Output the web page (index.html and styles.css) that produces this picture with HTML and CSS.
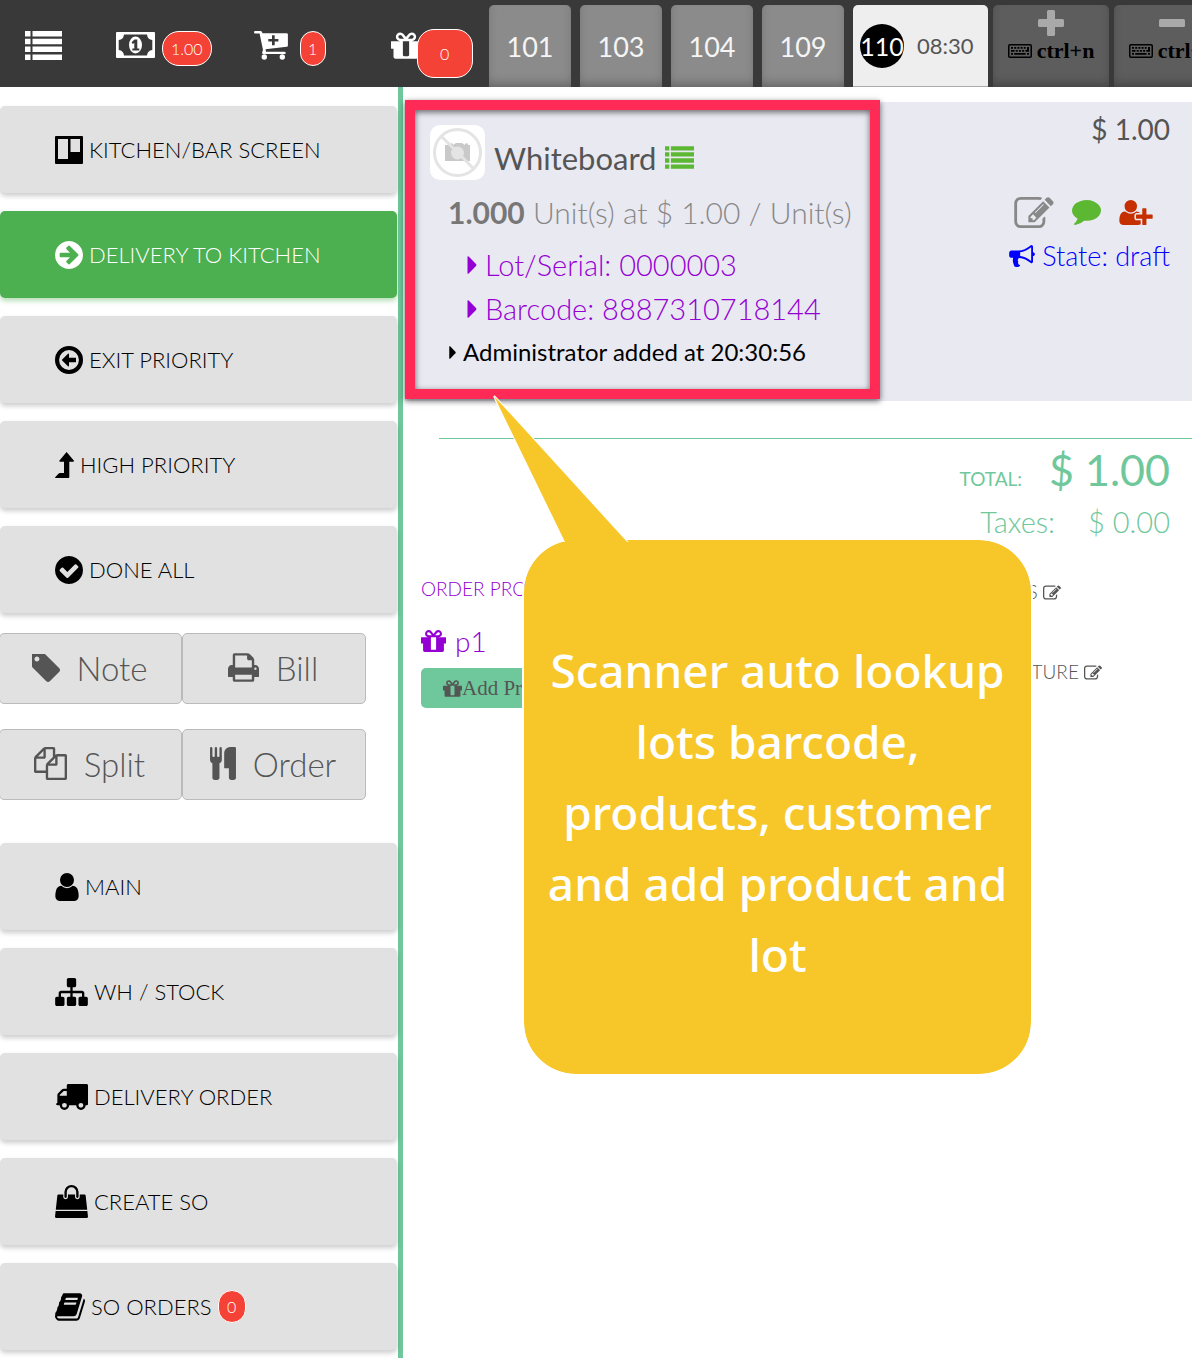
FILE: index.html
```html
<!DOCTYPE html>
<html lang="en">
<head>
<meta charset="utf-8">
<title>Point of Sale</title>
<link rel="stylesheet" href="styles.css">
</head>
<body>
<svg class="sprite" aria-hidden="true">
  <symbol id="list" viewBox="0 0 37 29"><path d="M0 0h5.500v5.500H0zM7.500 0H37v5.500H7.500zM0 7.800h5.500v5.500H0zM7.500 7.800H37v5.500H7.500zM0 15.600h5.500v5.500H0zM7.500 15.600H37v5.500H7.500zM0 23.400h5.500v5.500H0zM7.500 23.400H37v5.500H7.500z"/></symbol>
  <symbol id="money" viewBox="0 0 39 26"><path fill-rule="evenodd" d="M1 0h37q1 0 1 1v24q0 1-1 1H1q-1 0-1-1V1q0-1 1-1zM8 2.500Q7.500 7.500 2.700 8v10q4.800.5 5.300 5.500h23q.5-5 5.300-5.500V8Q31.500 7.500 31 2.500z"/><ellipse cx="19.500" cy="13" rx="6.500" ry="8.500"/><path fill="#393939" d="M18.500 7.500h2.800v9h2v2h-7v-2h2v-5.500l-1.500 1-1.200-1.700z"/></symbol>
  <symbol id="cart" viewBox="0 0 34 29"><path fill-rule="evenodd" d="M1.200 0h5.300q1.500 0 2 2.200H32.500q1.400 0 1.400 1.400v10.800q0 1.200-1.200 1.400l-21.200 2.500.5 2.400h18.500q1.200 0 1.200 1.200t-1.200 1.200H9.300q-1.400 0-1.200-1.500l.9-2.500L5.600 2.500H1.200Q0 2.500 0 1.200 0 0 1.200 0zM18 4.300v3.600h-3.700v2.600H18v3.700h2.700v-3.700h3.700V7.900h-3.700V4.300z"/><circle cx="10.300" cy="26" r="2.700"/><circle cx="28.300" cy="26" r="2.700"/></symbol>
  <symbol id="gift" viewBox="128 192 1536 1344"><path d="M1056 1356v-716h-320v716q0 25 18 38.500t46 13.500h192q28 0 46-13.500t18-38.500zm-456-844h195l-126-161q-26-31-69-31-40 0-68 28t-28 68 28 68 68 28zm688-96q0-40-28-68t-68-28q-43 0-69 31l-125 161h194q40 0 68-28t28-68zm376 256v320q0 14-9 23t-23 9h-96v416q0 40-28 68t-68 28h-1088q-40 0-68-28t-28-68v-416h-96q-14 0-23-9t-9-23v-320q0-14 9-23t23-9h440q-93 0-158.500-65.500t-65.500-158.500 65.500-158.500 158.500-65.500q107 0 168 77l128 165 128-165q61-77 168-77 93 0 158.500 65.500t65.500 158.500-65.500 158.500-158.500 65.500h440q14 0 23 9t9 23z"/></symbol>
  <symbol id="keyboard" viewBox="0 0 24 14"><rect x=".75" y=".75" width="22.500" height="12.500" rx="1.200" fill="none" stroke="currentColor" stroke-width="1.500"/><path d="M3 3h2v1.800H3zM6.200 3h2v1.800h-2zM9.400 3h2v1.800h-2zM12.600 3h2v1.800h-2zM15.800 3h1.800v1.800h-1.800zM19 3h2v4.800h-3.600V6H19zM3 6h3.500v1.800H3zM7.700 6h2v1.800h-2zM10.900 6h2v1.800h-2zM14.100 6h2v1.800h-2zM3 9h2v1.800H3zM6.200 9h11.400v1.800H6.200zM19 9h2v1.800h-2z"/></symbol>
  <symbol id="plus" viewBox="0 0 26 26"><path d="M10.500 0h5q1.500 0 1.500 1.500V9h7.500q1.500 0 1.500 1.500v5q0 1.500-1.500 1.500H17v7.500q0 1.500-1.500 1.500h-5Q9 26 9 24.500V17H1.500Q0 17 0 15.500v-5Q0 9 1.500 9H9V1.500Q9 0 10.500 0z"/></symbol>
  <symbol id="minus" viewBox="0 0 26 26"><rect y="9" width="26" height="8" rx="1.500"/></symbol>
  <symbol id="board" viewBox="0 0 28 28"><path fill-rule="evenodd" d="M1 0h26q1 0 1 1v26q0 1-1 1H1q-1 0-1-1V1q0-1 1-1zM3 3v20h10V3zM15.500 3v13H25V3z"/></symbol>
  <symbol id="arrow-right" viewBox="128 128 1536 1536"><path d="M1413 896q0-27-18-45l-91-91-362-362q-18-18-45-18t-45 18l-91 91q-18 18-18 45t18 45l189 189h-502q-26 0-45 19t-19 45v128q0 26 19 45t45 19h502l-189 189q-19 19-19 45t19 45l91 91q18 18 45 18t45-18l362-362 91-91q18-18 18-45zm251 0q0 209-103 385.500t-279.500 279.500-385.500 103-385.500-103-279.500-279.500-103-385.500 103-385.500 279.500-279.500 385.500-103 385.500 103 279.500 279.500 103 385.500z"/></symbol>
  <symbol id="arrow-left" viewBox="128 128 1536 1536"><circle cx="896" cy="896" r="656" fill="none" stroke="currentColor" stroke-width="224"/><path d="M1280 800v192q0 13-9.500 22.500t-22.500 9.500h-352v192q0 14-9 23t-23 9q-12 0-24-10l-319-319q-9-9-9-23t9-23l320-320q9-9 23-9 13 0 22.500 9.500t9.500 22.500v192h352q13 0 22.500 9.500t9.500 22.500z"/></symbol>
  <symbol id="level-up" viewBox="0 0 19 26"><path d="M11.600 0l7.200 8.500q.5 1-.6 1.200H14.300V25q0 1-1 1H.5Q-.3 25.600.4 24.900L3.700 21.600q.5-.5 1.200-.5H9V9.700H5Q4 9.500 4.500 8.500z"/></symbol>
  <symbol id="check" viewBox="128 128 1536 1536"><path d="M1412 734q0-28-18-46l-91-90q-19-19-45-19t-45 19l-408 407-226-226q-19-19-45-19t-45 19l-91 90q-18 18-18 46 0 27 18 45l362 362q19 19 45 19 27 0 46-19l543-543q18-18 18-45zm252 162q0 209-103 385.500t-279.500 279.500-385.500 103-385.500-103-279.500-279.500-103-385.500 103-385.500 279.500-279.500 385.500-103 385.500 103 279.500 279.500 103 385.500z"/></symbol>
  <symbol id="tag" viewBox="192 192 1451 1451"><path d="M576 448q0-53-37.500-90.500t-90.500-37.500-90.500 37.500-37.500 90.500 37.500 90.500 90.500 37.500 90.500-37.500 37.500-90.500zm1067 576q0 53-37 90l-491 492q-39 37-91 37-53 0-90-37l-715-716q-38-37-64.500-101t-26.500-117v-416q0-52 38-90t90-38h416q53 0 117 26.500t102 64.500l715 714q37 39 37 91z"/></symbol>
  <symbol id="print" viewBox="64 128 1664 1536"><path d="M448 1536h896v-256h-896v256zm0-640h896v-384h-160q-40 0-68-28t-28-68v-160h-640v640zm1152 64q0-26-19-45t-45-19-45 19-19 45 19 45 45 19 45-19 19-45zm128 0v416q0 13-9.500 22.500t-22.500 9.500h-224v160q0 40-28 68t-68 28h-960q-40 0-68-28t-28-68v-160h-224q-13 0-22.500-9.500t-9.500-22.500v-416q0-79 56.500-135.500t135.500-56.500h64v-544q0-40 28-68t68-28h672q40 0 88 20t76 48l152 152q28 28 48 76t20 88v256h64q79 0 135.500 56.500t56.500 135.500z"/></symbol>
  <symbol id="files" viewBox="0 0 1792 1792"><path d="M1696 384q40 0 68 28t28 68v1216q0 40-28 68t-68 28h-960q-40 0-68-28t-28-68v-288h-544q-40 0-68-28t-28-68v-672q0-40 20-88t48-76l408-408q28-28 76-48t88-20h416q40 0 68 28t28 68v328q68-40 128-40h416zm-544 213l-299 299h299v-299zm-640-384l-299 299h299v-299zm196 647l316-316v-416h-384v416q0 40-28 68t-68 28h-416v640h512v-256q0-40 20-88t48-76zm956 804v-1152h-384v416q0 40-28 68t-68 28h-416v640h896z"/></symbol>
  <symbol id="cutlery" viewBox="192 0 1408 1792"><path d="M832 64v640q0 61-35.500 111t-92.500 70v779q0 52-38 90t-90 38h-128q-52 0-90-38t-38-90v-779q-57-20-92.500-70t-35.500-111v-640q0-26 19-45t45-19 45 19 19 45v416q0 26 19 45t45 19 45-19 19-45v-416q0-26 19-45t45-19 45 19 19 45v416q0 26 19 45t45 19 45-19 19-45v-416q0-26 19-45t45-19 45 19 19 45zm768 0v1600q0 52-38 90t-90 38h-128q-52 0-90-38t-38-90v-512h-224q-13 0-22.500-9.500t-9.500-22.500v-800q0-132 94-226t226-94h256q26 0 45 19t19 45z"/></symbol>
  <symbol id="user" viewBox="256 128 1280 1536"><path d="M1536 1399q0 109-62.500 187t-150.500 78h-854q-88 0-150.500-78t-62.500-187q0-85 8.500-160.500t31.500-152 58.500-131 94-89 134.500-34.500q131 128 313 128t313-128q76 0 134.500 34.500t94 89 58.500 131 31.500 152 8.500 160.500zm-256-887q0 159-112.500 271.500t-271.500 112.500-271.500-112.500-112.500-271.500 112.500-271.500 271.500-112.500 271.500 112.500 112.500 271.500z"/></symbol>
  <symbol id="sitemap" viewBox="0 128 1792 1536"><path d="M1792 1248v320q0 40-28 68t-68 28h-320q-40 0-68-28t-28-68v-320q0-40 28-68t68-28h96v-192h-512v192h96q40 0 68 28t28 68v320q0 40-28 68t-68 28h-320q-40 0-68-28t-28-68v-320q0-40 28-68t68-28h96v-192h-512v192h96q40 0 68 28t28 68v320q0 40-28 68t-68 28h-320q-40 0-68-28t-28-68v-320q0-40 28-68t68-28h96v-192q0-52 38-90t90-38h512v-192h-96q-40 0-68-28t-28-68v-320q0-40 28-68t68-28h320q40 0 68 28t28 68v320q0 40-28 68t-68 28h-96v192h512q52 0 90 38t38 90v192h96q40 0 68 28t28 68z"/></symbol>
  <symbol id="truck" viewBox="0 256 1792 1408"><path d="M640 1408q0-52-38-90t-90-38-90 38-38 90 38 90 90 38 90-38 38-90zm-384-512h384v-256h-158q-13 0-22 9l-195 195q-9 9-9 22v30zm1280 512q0-52-38-90t-90-38-90 38-38 90 38 90 90 38 90-38 38-90zm256-1088v1024q0 15-4 26.500t-13.500 18.500-16.500 11.500-23.500 6-22.500 2-25.500 0-22.500-.5q0 106-75 181t-181 75-181-75-75-181h-384q0 106-75 181t-181 75-181-75-75-181h-64q-3 0-22.500.5t-25.500 0-22.500-2-23.500-6-16.500-11.500-13.500-18.500-4-26.500q0-26 19-45t45-19v-320q0-8-.5-35t0-38 2.500-34.500 6.500-37 14-30.500 22.500-30l198-198q19-19 50.500-32t58.500-13h160v-192q0-26 19-45t45-19h1024q26 0 45 19t19 45z"/></symbol>
  <symbol id="bag" viewBox="0 0 1792 1792"><path d="M1757 1408l35 313q3 28-16 50-19 21-48 21h-1664q-29 0-48-21-19-22-16-50l35-313h1722zm-93-839l86 775h-1708l86-775q3-24 21-40.500t43-16.500h256v128q0 53 37.500 90.500t90.500 37.500 90.500-37.500 37.500-90.500v-128h384v128q0 53 37.500 90.500t90.500 37.500 90.500-37.500 37.500-90.500v-128h256q25 0 43 16.500t21 40.500zm-384-185v256q0 26-19 45t-45 19-45-19-19-45v-256q0-106-75-181t-181-75-181 75-75 181v256q0 26-19 45t-45 19-45-19-19-45v-256q0-159 112.500-271.500t271.500-112.500 271.500 112.500 112.500 271.500z"/></symbol>
  <symbol id="book" viewBox="64 128 1664 1536"><path d="M1703 478q40 57 18 129l-275 906q-19 64-76.500 107.500t-122.500 43.500h-923q-77 0-148.500-53.500t-99.500-131.500q-24-67-2-127 0-4 3-27t4-37q1-8-3-21.500t-3-19.500q2-11 8-21t16.500-23.500 16.500-23.500q23-38 45-91.500t30-91.500q3-10 .5-30t-.5-28q3-11 17-28t17-23q21-36 42-92t25-90q1-9-2.500-32t.5-28q4-13 22-30.500t22-22.500q19-26 42.500-84.500t27.500-96.500q1-8-3-25.500t-2-26.500q2-8 9-18t18-23 17-21q8-12 16.500-30.500t15-35 16-36 19.500-32 26.500-23.500 36-11.500 47.500 5.500l-1 3q38-9 51-9h761q74 0 114 56t18 130l-274 906q-36 119-71.500 153.500t-128.500 34.500h-869q-27 0-38 15-11 16-1 43 24 70 144 70h923q29 0 56-15.500t35-41.500l300-987q7-22 5-57 38 15 59 43zm-1064 2q-4 13 2 22.500t20 9.500h608q13 0 25.500-9.500t16.500-22.500l21-64q4-13-2-22.500t-20-9.500h-608q-13 0-25.500 9.500t-16.500 22.500zm-83 256q-4 13 2 22.500t20 9.500h608q13 0 25.500-9.500t16.500-22.500l21-64q4-13-2-22.500t-20-9.500h-608q-13 0-25.500 9.500t-16.500 22.500z"/></symbol>
  <symbol id="edit" viewBox="0 128 1792 1408"><path d="M888 1184l116-116-152-152-116 116v56h96v96h56zm440-720q-16-16-33 1l-350 350q-17 17-1 33t33-1l350-350q17-17 1-33zm80 594v190q0 119-84.500 203.500t-203.500 84.500h-832q-119 0-203.500-84.500t-84.500-203.500v-832q0-119 84.500-203.500t203.500-84.500h832q63 0 117 25 15 7 18 23 3 17-9 29l-49 49q-14 14-32 8-23-6-45-6h-832q-66 0-113 47t-47 113v832q0 66 47 113t113 47h832q66 0 113-47t47-113v-126q0-13 9-22l64-64q15-15 35-7t20 29zm-96-738l288 288-672 672h-288v-288zm444 132l-92 92-288-288 92-92q28-28 68-28t68 28l152 152q28 28 28 68t-28 68z"/></symbol>
  <symbol id="comment" viewBox="0 256 1792 1536"><path d="M1792 896q0 174-120 321.500t-326 233-450 85.500q-70 0-145-8-198 175-460 242-49 14-114 22-17 2-30.500-9t-17.500-29v-1q-3-4-.5-12t2-10 4.500-9.500l6-9 7-8.500 8-9q7-8 31-34.500t34.500-38 31-39.500 32.500-51 27-59 26-76q-157-89-247.500-220t-90.500-281q0-130 71-248.500t191-204.500 286-136.500 348-50.500q244 0 450 85.500t326 233 120 321.500z"/></symbol>
  <symbol id="user-plus" viewBox="0 128 2048 1536"><path d="M704 896q-159 0-271.500-112.500T320 512t112.500-271.500T704 128t271.500 112.500T1088 512 975.500 783.500 704 896zm960 128h352q13 0 22.500 9.500t9.500 22.500v192q0 13-9.500 22.500t-22.500 9.500h-352v352q0 13-9.500 22.500t-22.500 9.500h-192q-13 0-22.500-9.500t-9.500-22.500v-352h-352q-13 0-22.500-9.500t-9.500-22.500v-192q0-13 9.500-22.500t22.500-9.500h352v-352q0-13 9.500-22.500t22.500-9.500h192q13 0 22.500 9.500t9.500 22.500v352zm-736 224q0 52 38 90t90 38h256v238q-68 50-171 50H267q-121 0-194-69T0 1405q0-53 3.500-103.500t14-109T44 1084t43-97.500 62-81 85.500-53.500T346 832q19 0 39 17 79 61 154.500 91.500T704 971t164.500-30.500T1023 849q20-17 39-17 132 0 217 96h-223q-52 0-90 38t-38 90v192z"/></symbol>
  <symbol id="bullhorn" viewBox="0 128 1792 1536"><path d="M1664 640q53 0 90.500 37.500t37.500 90.500-37.500 90.500-90.500 37.500v384q0 52-38 90t-90 38q-417-347-812-380-58 19-91 66t-31 100.500 40 92.500q-20 33-23 65.500t6 58 33.500 55 48 50 61.500 50.500q-29 58-111.500 83t-168.500 11.500-132-55.500q-7-23-29.500-87.500t-32-94.500-23-89-15-101 3.500-98.500 22-110.500h-122q-66 0-113-47t-47-113v-192q0-66 47-113t113-47h480q435 0 896-384 52 0 90 38t38 90v384zm-128 604v-954q-394 302-768 343v270q377 42 768 341z"/></symbol>
  <symbol id="caret" viewBox="0 0 9 18"><path d="M0 .8Q.2-.2 1.200.4L8.500 8q.8 1 0 2l-7.300 7.600q-1 .6-1.200-.4z"/></symbol>
</svg>

<header class="topbar">
  <nav class="tools" aria-label="Tools">
    <a class="tool tool-menu" href="#" aria-label="Menu"><svg class="i-menu"><use href="#list"/></svg></a>
    <a class="tool tool-cash" href="#" aria-label="Cash"><svg class="i-money"><use href="#money"/></svg><span class="badge">1.00</span></a>
    <a class="tool tool-cart" href="#" aria-label="Cart"><svg class="i-cart"><use href="#cart"/></svg><span class="badge badge-slim">1</span></a>
    <a class="tool tool-gift" href="#" aria-label="Promotions"><svg class="i-gift"><use href="#gift"/></svg><span class="badge badge-big">0</span></a>
  </nav>
  <nav class="tabs" aria-label="Orders">
    <button class="tab">101</button>
    <button class="tab">103</button>
    <button class="tab">104</button>
    <button class="tab">109</button>
    <button class="tab tab-active"><span class="tab-number">110</span><span class="tab-time">08:30</span></button>
    <button class="tab tab-action"><svg class="i-sign"><use href="#plus"/></svg><span class="keys"><svg class="i-keyboard"><use href="#keyboard"/></svg>ctrl+n</span></button>
    <button class="tab tab-action"><svg class="i-sign"><use href="#minus"/></svg><span class="keys"><svg class="i-keyboard"><use href="#keyboard"/></svg>ctrl+d</span></button>
  </nav>
</header>

<div class="layout">
  <aside class="sidebar">
    <div class="stack">
      <button class="action"><svg class="i-28"><use href="#board"/></svg>KITCHEN/BAR SCREEN</button>
      <button class="action action-green"><svg class="i-28"><use href="#arrow-right"/></svg>DELIVERY TO KITCHEN</button>
      <button class="action"><svg class="i-28"><use href="#arrow-left"/></svg>EXIT PRIORITY</button>
      <button class="action"><svg class="i-level"><use href="#level-up"/></svg>HIGH PRIORITY</button>
      <button class="action"><svg class="i-28"><use href="#check"/></svg>DONE ALL</button>
    </div>
    <div class="pad">
      <button class="key"><svg class="i-28"><use href="#tag"/></svg>Note</button>
      <button class="key"><svg class="i-print"><use href="#print"/></svg>Bill</button>
      <button class="key"><svg class="i-33"><use href="#files"/></svg>Split</button>
      <button class="key"><svg class="i-cutlery"><use href="#cutlery"/></svg>Order</button>
    </div>
    <div class="stack">
      <button class="action"><svg class="i-user"><use href="#user"/></svg>MAIN</button>
      <button class="action"><svg class="i-wide"><use href="#sitemap"/></svg>WH / STOCK</button>
      <button class="action"><svg class="i-truck"><use href="#truck"/></svg>DELIVERY ORDER</button>
      <button class="action"><svg class="i-33"><use href="#bag"/></svg>CREATE SO</button>
      <button class="action"><svg class="i-book"><use href="#book"/></svg>SO ORDERS<span class="badge badge-row">0</span></button>
    </div>
  </aside>

  <main class="order">
    <section class="line">
      <div class="line-info">
        <div class="product">
          <svg class="thumb" viewBox="0 0 55 55" aria-hidden="true"><rect width="55" height="55" rx="10" fill="#fff"/><path fill="#c9c9c9" d="M15 20h5v-1.500h3V20l3-2h6l3 2v-1.500h3V20h2v16H15z"/><circle cx="27.500" cy="28" r="6.500" fill="#e4e4e4"/><circle cx="27.500" cy="27.500" r="23" fill="none" stroke="#e4e4e4" stroke-width="3"/><path stroke="#e4e4e4" stroke-width="3" d="M11 11l33 33"/></svg>
          <h1 class="product-name">Whiteboard</h1>
          <svg class="i-lines"><use href="#list"/></svg>
        </div>
        <p class="qty"><b>1.000</b> Unit(s) at $ 1.00 / Unit(s)</p>
        <ul class="details">
          <li><svg class="i-caret"><use href="#caret"/></svg>Lot/Serial: 0000003</li>
          <li><svg class="i-caret"><use href="#caret"/></svg>Barcode: 8887310718144</li>
        </ul>
        <p class="log"><svg class="i-caret-small"><use href="#caret"/></svg>Administrator added at 20:30:56</p>
      </div>
      <div class="line-side">
        <div class="price">$ 1.00</div>
        <div class="line-tools">
          <a class="grey" href="#" aria-label="Edit"><svg class="i-edit"><use href="#edit"/></svg></a>
          <a class="green" href="#" aria-label="Comment"><svg class="i-comment"><use href="#comment"/></svg></a>
          <a class="rust" href="#" aria-label="Add customer"><svg class="i-adduser"><use href="#user-plus"/></svg></a>
        </div>
        <div class="state"><svg class="i-bullhorn"><use href="#bullhorn"/></svg>State: draft</div>
      </div>
    </section>

    <section class="totals">
      <div class="total"><span class="total-label">TOTAL:</span><span class="total-value">$ 1.00</span></div>
      <div class="taxes"><span>Taxes:</span><span>$ 0.00</span></div>
    </section>

    <section class="extras">
      <div class="promotions">
        <h2 class="promo-title">ORDER PROMOTIONS</h2>
        <p class="promo"><svg class="i-promo"><use href="#gift"/></svg>p1</p>
        <button class="add"><svg class="i-add"><use href="#gift"/></svg>Add Promotion</button>
      </div>
      <div class="links">
        <a href="#">NOTES<svg class="i-link"><use href="#edit"/></svg></a>
        <a href="#">SIGNATURE<svg class="i-link"><use href="#edit"/></svg></a>
      </div>
    </section>

    <div class="frame"></div>
    <div class="callout">
      <svg class="tail" viewBox="0 0 140 149" aria-hidden="true"><path d="M75 151L3 3l135 148"/></svg>
      <p>Scanner auto lookup lots barcode, products, customer and add product and lot</p>
    </div>
  </main>
</div>
</body>
</html>
```

FILE: styles.css
```css
* { box-sizing: border-box; }
body {
  margin: 0;
  min-height: 100vh;
  display: flex;
  flex-direction: column;
  background: #fff;
  color: #555;
  font-family: Lato, "Open Sans", sans-serif;
  font-weight: 300;
  overflow-x: hidden;
}
h1, h2, p, ul { margin: 0; padding: 0; font-weight: inherit; list-style: none; }
button { font: inherit; color: inherit; border: 0; padding: 0; cursor: pointer; }
a { color: inherit; text-decoration: none; }
svg { display: block; flex: none; fill: currentColor; }
.sprite { position: absolute; width: 0; height: 0; }

/* icon sizes */
.i-menu { width: 37px; height: 29px; }
.i-money { width: 39px; height: 26px; }
.i-cart { width: 34px; height: 29px; }
.i-gift { width: 30px; height: 27px; }
.i-28 { width: 28px; height: 28px; }
.i-33 { width: 33px; height: 33px; }
.i-level { width: 19px; height: 26px; }
.i-print { width: 31px; height: 29px; }
.i-cutlery { width: 26px; height: 33px; }
.i-user { width: 24px; height: 28px; }
.i-wide { width: 33px; height: 28px; }
.i-truck { width: 33px; height: 26px; }
.i-book { width: 30px; height: 28px; }
.i-sign { width: 26px; height: 26px; }
.i-keyboard { width: 24px; height: 14px; }
.i-lines { width: 29px; height: 23px; color: #5cb832; }
.i-caret { width: 10px; height: 18px; }
.i-caret-small { width: 7px; height: 13px; }
.i-edit { width: 40px; height: 31px; }
.i-comment { width: 29px; height: 25px; }
.i-adduser { width: 34px; height: 25px; }
.i-bullhorn { width: 26px; height: 22px; }
.i-promo { width: 25px; height: 22px; }
.i-add { width: 19px; height: 17px; }
.i-link { width: 18px; height: 15px; }
.thumb { width: 55px; height: 55px; }

/* top bar */
.topbar { display: flex; height: 87px; background: #393939; color: #fff; overflow: hidden; }
.tools { display: flex; flex: none; align-items: center; width: 489px; padding: 3px 16px 0 25px; }
.tool { display: flex; align-items: center; }
.tool-cash { gap: 7px; margin-left: 54px; }
.tool-cart { gap: 12px; margin-left: 42px; }
.tool-gift { margin-left: 65px; }
.badge {
  display: flex; align-items: center; justify-content: center;
  min-width: 28px; height: 35px; padding: 0 8px;
  border: 1px solid #fff; border-radius: 17px;
  background: #f44336; color: #fff; font-size: 16px;
}
.tool .badge { margin-top: 7px; }
.tool .badge-slim { min-width: 26px; padding: 0; }
.tool .badge-big { width: 56px; height: 49px; margin-left: -4px; margin-top: 17px; }
.badge-row { height: 33px; padding: 0; }
.tabs { display: flex; gap: 9px; padding-top: 5px; }
.tab {
  flex: none; width: 82px; height: 82px;
  border-radius: 5px 5px 0 0; background: #8b8b8b; color: #f5f5f5;
  box-shadow: inset 0 -6px 12px -4px #0005;
  font-size: 27px; font-weight: 400;
}
.tab-active {
  display: flex; align-items: center; gap: 13px; width: 135px; padding-left: 7px;
  background: #eee; color: #555; box-shadow: none; border-bottom: 1px solid #aaa;
}
.tab-number {
  display: flex; align-items: center; justify-content: center;
  width: 44px; height: 44px; border-radius: 50%; background: #000; color: #fff; font-size: 25px;
}
.tab-time { font-size: 22px; }
.tab-action {
  display: flex; flex-direction: column; align-items: center; gap: 5px;
  width: 116px; padding-top: 5px; margin-left: -4px; background: #5d5d5d; color: #a9a9a9;
}
.keys { display: flex; align-items: center; gap: 5px; color: #000; font: bold 22px/20px "Liberation Serif", serif; }

/* page columns */
.layout { flex: 1; display: grid; grid-template-columns: 403px 1fr; }
.sidebar { border-right: 5px solid #6ec89b; padding: 19px 1px 8px 0; }
.stack { display: flex; flex-direction: column; gap: 18px; }
.action {
  display: flex; align-items: center; gap: 6px; height: 87px; padding-left: 55px;
  border-radius: 5px; background: #e1e1e1; color: #000; font-size: 22px;
  box-shadow: 0 3px 5px #0003;
}
.action-green { background: #4caf50; color: #fff; box-shadow: 0 3px 5px #4caf5066; }
.pad { display: grid; grid-template-columns: 183px 184px; row-gap: 25px; margin: 20px 0 43px -1px; }
.key {
  display: flex; align-items: center; justify-content: center; gap: 17px; height: 71px;
  padding: 0 2px 2px 0;
  border: 1px solid #bbb; border-radius: 5px; background: #e1e1e1; font-size: 33px;
}

/* order line */
.order { position: relative; padding-top: 15px; min-width: 0; }
.line {
  display: flex; justify-content: space-between; min-height: 299px;
  margin-left: 2px; padding: 5px 22px 27px 25px; background: #e9e9f2;
}
.line-info { padding-top: 18px; }
.product { display: flex; align-items: center; gap: 9px; height: 55px; }
.product-name { padding-top: 10px; font-size: 31px; line-height: 36px; font-weight: 400; }
.i-lines { margin-top: 10px; }
.qty { margin: 10px 0 9px 18px; font-size: 30px; line-height: 44px; color: #888; }
.qty b { font-weight: 700; color: #777; }
.details { padding-left: 37px; color: #9400d3; font-size: 29px; line-height: 44px; }
.details li { display: flex; align-items: center; gap: 8px; }
.log { display: flex; align-items: center; gap: 7px; padding-left: 19px; color: #000; font-size: 24px; line-height: 42px; font-weight: 400; }
.line-side { display: flex; flex-direction: column; align-items: flex-end; }
.price { font-size: 28px; line-height: 44px; font-weight: 400; }
.line-tools { display: flex; align-items: center; gap: 18px; height: 44px; margin-top: 39px; padding-right: 17px; }
.grey { color: #888; }
.green { color: #5cb832; }
.rust { color: #c63000; }
.state { display: flex; align-items: center; gap: 7px; color: #00f; font-size: 27px; line-height: 44px; }

/* totals */
.totals { margin: 37px 0 0 36px; padding: 3px 22px 0 0; border-top: 1px solid #6ec89b; color: #6ec89b; }
.total { display: flex; justify-content: flex-end; align-items: baseline; gap: 27px; line-height: 56px; }
.total-label { font-size: 19px; line-height: 24px; font-weight: 400; }
.total-value { font-size: 43px; font-weight: 400; }
.taxes { display: flex; justify-content: flex-end; gap: 33px; font-size: 29px; line-height: 48px; }

/* promotions and links */
.extras { display: grid; grid-template-columns: 556px 1fr; margin-top: 29px; padding-left: 18px; }
.promotions { display: flex; flex-direction: column; align-items: flex-start; }
.promo-title { color: #9400d3; font-size: 19px; line-height: 28px; }
.promo { display: flex; align-items: center; gap: 9px; margin-top: 18px; color: #9400d3; font-size: 28px; line-height: 40px; }
.add {
  display: flex; align-items: center; height: 40px; margin-top: 7px; padding: 0 22px;
  border-radius: 5px; background: #6ec89b; font: 21px "Liberation Serif", serif;
}
.links { display: flex; flex-direction: column; gap: 52px; padding-top: 3px; font-size: 19px; line-height: 28px; }
.links a { display: flex; align-items: center; gap: 5px; }

/* annotation layer over the order */
.frame {
  position: absolute; left: 2px; top: 13px; width: 475px; height: 299px;
  border: 10px solid #ff2a55; box-shadow: 0 2px 6px #0009, inset 0 2px 6px #0009;
}
.callout {
  position: absolute; left: 121px; top: 453px; width: 507px; height: 534px;
  padding: 95px 16px 0; border-radius: 52px; background: #f7c72a; color: #fff;
  outline: 2px solid #fff;
  font-family: "Noto Sans", "Open Sans", sans-serif; font-size: 46px; line-height: 71px; font-weight: 500; text-align: center;
}
.tail {
  position: absolute; left: -33px; top: -147px; width: 140px; height: 149px;
  fill: #f7c72a; stroke: #fff; stroke-width: 2px; paint-order: stroke;
}
```
